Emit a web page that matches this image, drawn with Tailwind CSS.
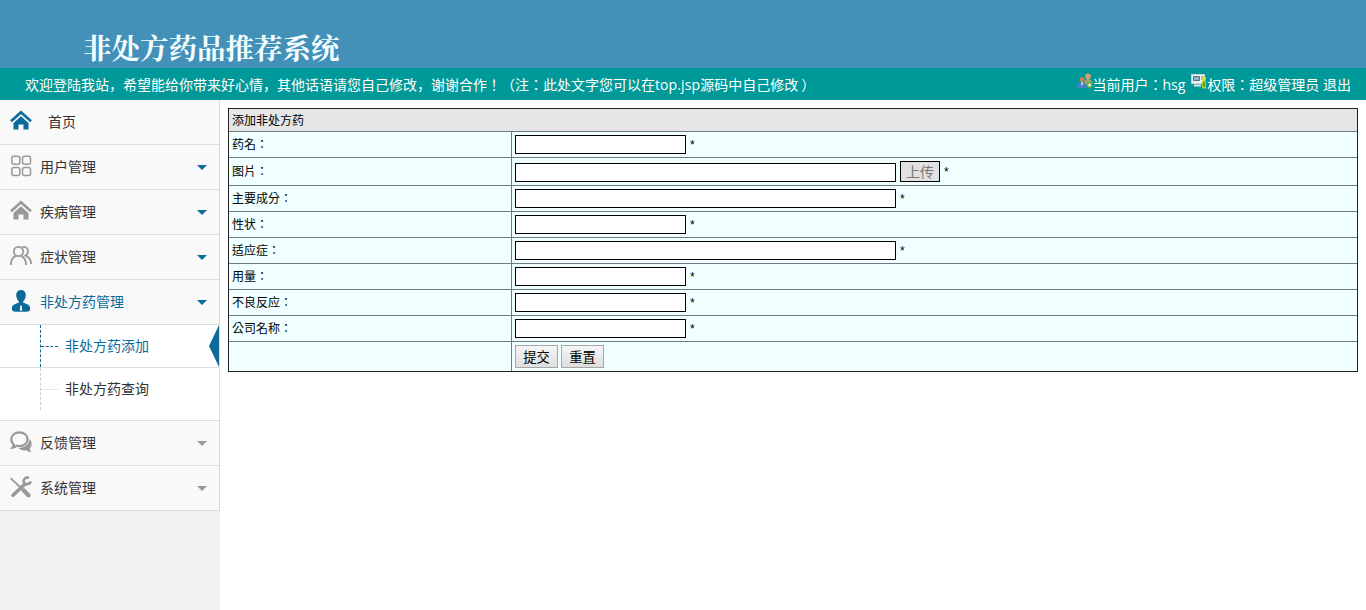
<!DOCTYPE html>
<html lang="zh-CN">
<head>
    <meta charset="UTF-8">
    <meta name="viewport" content="width=device-width, initial-scale=1.0">
    <title>非处方药品推荐系统</title>
    <script src="https://cdn.jsdelivr.net/npm/@tailwindcss/browser@4"></script>
</head>
<body class="h-screen overflow-hidden flex flex-col bg-white font-['Open_Sans','Noto_Sans_CJK_SC',sans-serif] text-sm text-[#333]">
<header class="shrink-0 text-white">
    <div class="h-[68px] bg-[#4390b9] pl-[83px] pt-[27px]">
        <h1 class="font-['Noto_Serif_CJK_SC','Noto_Sans_CJK_SC',serif] font-bold text-[28.5px] leading-[40px] text-[#f4ffff]">非处方药品推荐系统</h1>
    </div>
    <div class="h-8 bg-[#009999] flex items-center justify-between pl-[25px] pr-[15px] leading-8 whitespace-nowrap">
        <span class="pt-px">欢迎登陆我站，希望能给你带来好心情，其他话语请您自己修改，谢谢合作<span class="font-['Noto_Sans_CJK_TC']" lang="zh-TW">！</span>（注<span class="font-['Noto_Sans_CJK_TC']" lang="zh-TW">：</span>此处文字您可以在<span class="tracking-[0.1px]">top.jsp</span>源码中自己修改<span class="ml-[3px]">）</span></span>
        <div class="flex items-center">
            <svg class="w-4 h-4 mb-1.5" viewBox="0 0 16 16">
                <circle cx="11" cy="3.2" r="2.8" fill="#d9a066"/>
                <path d="M6.5 12c0-4 2-6 4.5-6s4.500 2 4.500 6z" fill="#9aa86a"/>
                <circle cx="5" cy="6.500" r="2.500" fill="#c98252"/>
                <path d="M.5 15c0-4 2-6 4.500-6s4.500 2 4.500 6z" fill="#4a7fd0"/>
                <path d="M4 9.500h2L5 13z" fill="#fff"/>
                <circle cx="12.500" cy="12" r="3" fill="#5fa83a"/>
                <path d="M12.500 10.300v3.400M10.800 12h3.400" stroke="#fff" stroke-width="1.200"/>
            </svg>
            <span>当前用户<span class="font-['Noto_Sans_CJK_TC']" lang="zh-TW">：</span>hsg</span>
            <svg class="w-4 h-4 mb-1.5 ml-[6px]" viewBox="0 0 16 16">
                <path d="M.5 1.500h13v9H.5z" fill="#eef3f6" stroke="#c8d4da"/>
                <path d="M2.500 3.500h6v4h-6z" fill="#8db4c8" stroke="#56707c"/>
                <path d="M10 4h3M10 6h3" stroke="#6b7f88"/>
                <path d="M3 12.500h7" stroke="#dfe8ec" stroke-width="2"/>
                <path d="M11 7.500h4v8h-4z" fill="#b5d334"/>
                <circle cx="13" cy="5.500" r="2" fill="#d7e44e"/>
                <path d="M13 8.500v5.500" stroke="#3d7a1c" stroke-width="1.200"/>
            </svg>
            <span>权限<span class="font-['Noto_Sans_CJK_TC']" lang="zh-TW">：</span>超级管理员&nbsp;退出</span>
        </div>
    </div>
</header>
<div class="flex flex-1 min-h-0">
    <nav class="w-[220px] shrink-0 bg-[#f1f1f1]">
        <ul class="border-r border-[#ddd] bg-[#f9f9f9]">
            <li class="h-[45px] flex items-center border-b border-[#ddd] pl-[10px]">
                <svg class="w-[22px] h-[22px] mr-4 mb-0.5 text-[#0b6a99]" viewBox="0 0 22 22" fill="currentColor">
                    <path d="M1 11.200 11 2.200l10 9" fill="none" stroke="currentColor" stroke-width="2.600"/>
                    <path d="M3.500 13 11 6.300l7.500 6.700v6.500h-5v-5h-5v5h-5z"/>
                </svg>
                首页
            </li>
            <li class="h-[45px] flex items-center border-b border-[#ddd] pl-[10px] pr-3">
                <svg class="w-[22px] h-[22px] mr-2 mb-0.5 text-[#999]" viewBox="0 0 22 22" fill="none" stroke="currentColor" stroke-width="1.500">
                    <rect x="1.800" y="1.300" width="8" height="8" rx="2"/>
                    <rect x="12.500" y="1.300" width="8" height="8" rx="2"/>
                    <rect x="1.800" y="12.500" width="8" height="8" rx="2"/>
                    <rect x="12.500" y="12.500" width="8" height="8" rx="2"/>
                </svg>
                用户管理
                <svg class="w-[10px] h-[5px] ml-auto text-[#0b6a99]" viewBox="0 0 10 5"><path d="M0 0h10L5 5z" fill="currentColor"/></svg>
            </li>
            <li class="h-[45px] flex items-center border-b border-[#ddd] pl-[10px] pr-3">
                <svg class="w-[22px] h-[22px] mr-2 mb-0.5 text-[#999]" viewBox="0 0 22 22" fill="currentColor">
                    <path d="M1 11.200 11 2.200l10 9" fill="none" stroke="currentColor" stroke-width="2.600"/>
                    <path d="M3.500 13 11 6.300l7.500 6.700v6.500h-5v-5h-5v5h-5z"/>
                </svg>
                疾病管理
                <svg class="w-[10px] h-[5px] ml-auto text-[#0b6a99]" viewBox="0 0 10 5"><path d="M0 0h10L5 5z" fill="currentColor"/></svg>
            </li>
            <li class="h-[45px] flex items-center border-b border-[#ddd] pl-[10px] pr-3">
                <svg class="w-[22px] h-[22px] mr-2 mb-0.5 text-[#999]" viewBox="0 0 22 22" fill="none" stroke="currentColor" stroke-width="1.800">
                    <circle cx="8.500" cy="6.500" r="4.700"/>
                    <path d="M.8 20c0-5 2.400-8 5.200-9.200M11 10.800c2.800 1.200 5 4.200 5 9.200"/>
                    <path d="M12.300 2.300c3-1.200 5.700.8 5.700 3.900 0 2-1 3.600-2.500 4.400 3.300 1.200 5.500 4 5.700 8.400"/>
                </svg>
                症状管理
                <svg class="w-[10px] h-[5px] ml-auto text-[#0b6a99]" viewBox="0 0 10 5"><path d="M0 0h10L5 5z" fill="currentColor"/></svg>
            </li>
            <li class="h-[45px] flex items-center border-b border-[#ddd] pl-[10px] pr-3 text-[#0b6a99]">
                <svg class="w-[22px] h-[22px] mr-2 mb-0.5" viewBox="0 0 22 22" fill="currentColor">
                    <path d="M11 0c3 0 4.800 2 4.800 5 0 3-1.200 5-2.600 6.300v1.500c3 1 6.600 1.800 6.900 5.200.1 1.500-.2 2.500-.8 2.900-2.300 1.200-14.300 1.200-16.600 0-.6-.4-.9-1.400-.8-2.900.3-3.400 3.900-4.200 6.900-5.200v-1.500C7.400 10 6.200 8 6.200 5c0-3 1.800-5 4.800-5z"/>
                    <path d="M10.300 15.500h1.400l.5 5h-2.400z" fill="#f9f9f9"/>
                </svg>
                非处方药管理
                <svg class="w-[10px] h-[5px] ml-auto" viewBox="0 0 10 5"><path d="M0 0h10L5 5z" fill="currentColor"/></svg>
            </li>
            <!-- submenu -->
            <li class="bg-white border-b border-[#ddd] pb-[10px]">
                <div class="h-[43px] flex items-center border-b border-[#ddd] pl-10 text-[#0b6a99]">
                    <span class="h-full border-l border-dashed border-[#0b6a99]"></span>
                    <span class="w-[17px] border-t border-dashed border-[#0b6a99] mr-[7px]"></span>
                    非处方药添加
                    <svg class="w-[10px] h-[42px] ml-auto" viewBox="0 0 10 42"><path d="M10 0v42L0 21z" fill="currentColor"/></svg>
                </div>
                <div class="h-[42px] flex items-center pl-10">
                    <span class="h-full border-l border-dashed border-[#ccc]"></span>
                    <span class="w-[17px] border-t border-dotted border-[#ccc] mr-[7px]"></span>
                    非处方药查询
                </div>
            </li>
            <li class="h-[45px] flex items-center border-b border-[#ddd] pl-[10px] pr-3">
                <svg class="w-[22px] h-[22px] mr-2 mb-0.5 text-[#999]" viewBox="0 0 22 22" fill="currentColor">
                    <path d="M9.500 1.300c4.600 0 8 2.900 8 6.900s-3.400 6.900-8 6.900c-.9 0-1.800-.1-2.600-.4-1.200 1-2.700 1.800-4.400 2 .8-1 1.200-2 1.300-3.300C2.200 12.200 1.300 10.400 1.300 8.200c0-4 3.600-6.900 8.200-6.900z" fill="none" stroke="currentColor" stroke-width="2.200"/>
                    <path d="M19.500 8c2.800 3 2.900 7 .2 9.500.2 1.500.8 2.700 1.800 3.700-2 0-3.800-.7-5.200-1.900-3 .6-6-.2-7.800-2.300C14 17 19 14 19.500 8z"/>
                </svg>
                反馈管理
                <svg class="w-[10px] h-[5px] ml-auto text-[#999]" viewBox="0 0 10 5"><path d="M0 0h10L5 5z" fill="currentColor"/></svg>
            </li>
            <li class="h-[45px] flex items-center border-b border-[#ddd] pl-[10px] pr-3">
                <svg class="w-[22px] h-[22px] mr-2 mb-0.5 text-[#999]" viewBox="0 0 22 22" fill="none" stroke="currentColor" stroke-linecap="round">
                    <path d="M1.300 2.800 10 11" stroke-width="1.800"/>
                    <path d="m13.500 14.200 5 5" stroke-width="4.200"/>
                    <path d="M3 19.300 14.500 8.500" stroke-width="3.600"/>
                    <path d="M19 1.800c-3.500-1-6 1.700-5.200 4.400 1 2.800 5.800 2.600 7-.7" stroke-width="2.600" stroke-linecap="butt"/>
                </svg>
                系统管理
                <svg class="w-[10px] h-[5px] ml-auto text-[#999]" viewBox="0 0 10 5"><path d="M0 0h10L5 5z" fill="currentColor"/></svg>
            </li>
        </ul>
    </nav>
    <main class="flex-1 p-2">
        <form lang="zh-TW" class="border border-[#222] bg-[#f0ffff] text-xs text-black font-['Liberation_Sans','Noto_Sans_CJK_TC',sans-serif]">
            <div lang="zh-CN" class="h-[22px] flex items-center pl-[3px] bg-[#e6e6e6] font-['Noto_Sans_CJK_SC']">添加非处方药</div>
            <div class="h-[26px] flex border-t border-[#72797c]">
                <label class="w-[283px] border-r border-[#72797c] flex items-center pl-[3px]">药名：</label>
                <div class="flex items-center pl-[3px] gap-[4px]"><input type="text" class="w-[171px] h-[19px] border border-black bg-white">*</div>
            </div>
            <div class="h-[28px] flex border-t border-[#72797c]">
                <label class="w-[283px] border-r border-[#72797c] flex items-center pl-[3px]">图片：</label>
                <div class="flex items-center pl-[3px] gap-[4px]">
                    <input type="text" class="w-[381px] h-[19px] mt-0.5 border border-black bg-white">
                    <button type="button" class="w-10 h-[21px] border border-black bg-[#e1e1e1] text-sm leading-[21px] text-[#777]">上传</button>*
                </div>
            </div>
            <div class="h-[26px] flex border-t border-[#72797c]">
                <label class="w-[283px] border-r border-[#72797c] flex items-center pl-[3px]">主要成分：</label>
                <div class="flex items-center pl-[3px] gap-[4px]"><input type="text" class="w-[381px] h-[19px] border border-black bg-white">*</div>
            </div>
            <div class="h-[26px] flex border-t border-[#72797c]">
                <label class="w-[283px] border-r border-[#72797c] flex items-center pl-[3px]">性状：</label>
                <div class="flex items-center pl-[3px] gap-[4px]"><input type="text" class="w-[171px] h-[19px] border border-black bg-white">*</div>
            </div>
            <div class="h-[26px] flex border-t border-[#72797c]">
                <label class="w-[283px] border-r border-[#72797c] flex items-center pl-[3px]">适应症：</label>
                <div class="flex items-center pl-[3px] gap-[4px]"><input type="text" class="w-[381px] h-[19px] border border-black bg-white">*</div>
            </div>
            <div class="h-[26px] flex border-t border-[#72797c]">
                <label class="w-[283px] border-r border-[#72797c] flex items-center pl-[3px]">用量：</label>
                <div class="flex items-center pl-[3px] gap-[4px]"><input type="text" class="w-[171px] h-[19px] border border-black bg-white">*</div>
            </div>
            <div class="h-[26px] flex border-t border-[#72797c]">
                <label class="w-[283px] border-r border-[#72797c] flex items-center pl-[3px]">不良反应：</label>
                <div class="flex items-center pl-[3px] gap-[4px]"><input type="text" class="w-[171px] h-[19px] border border-black bg-white">*</div>
            </div>
            <div class="h-[26px] flex border-t border-[#72797c]">
                <label class="w-[283px] border-r border-[#72797c] flex items-center pl-[3px]">公司名称：</label>
                <div class="flex items-center pl-[3px] gap-[4px]"><input type="text" class="w-[171px] h-[19px] border border-black bg-white">*</div>
            </div>
            <div class="h-[30px] flex border-t border-[#72797c]">
                <div class="w-[283px] border-r border-[#72797c]"></div>
                <div class="flex items-center pl-[3px] gap-[3px] text-[13.333px]">
                    <button type="button" class="w-[43px] h-[23px] border border-[#a6a6a6] bg-linear-to-b from-[#f6f6f6] to-[#dedede] leading-[23px]">提交</button>
                    <button type="button" class="w-[43px] h-[23px] border border-[#a6a6a6] bg-linear-to-b from-[#f6f6f6] to-[#dedede] leading-[23px]">重置</button>
                </div>
            </div>
        </form>
    </main>
</div>
</body>
</html>
